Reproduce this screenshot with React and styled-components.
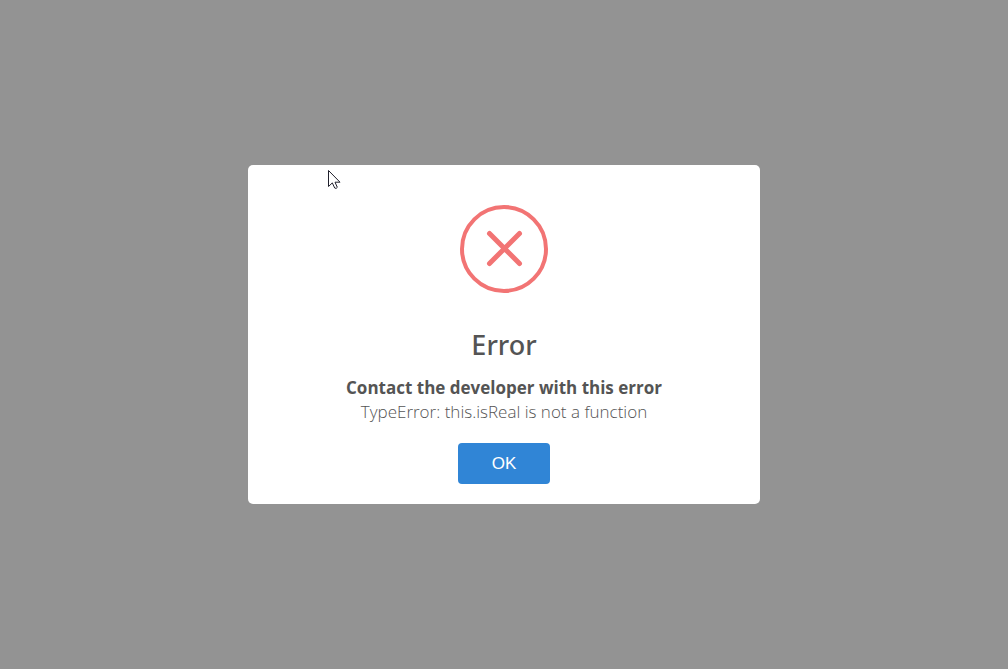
import React from "react";
import styled, { createGlobalStyle } from "styled-components";

const GlobalStyle = createGlobalStyle`
  *, *::before, *::after { box-sizing: border-box; }
  body { margin: 0; background: #939393; }
`;

const Backdrop = styled.main`
  min-height: 100vh;
  padding: 10px;
  display: flex;
  align-items: center;
  justify-content: center;
  background: #939393;
  font-family: "Segoe UI", "Open Sans", "Noto Sans", sans-serif;
`;

const Dialog = styled.section`
  width: 100%;
  max-width: 512px;
  padding: 40px 20px 20px;
  display: flex;
  flex-direction: column;
  align-items: center;
  border-radius: 5px;
  background: #fff;
  color: #545454;
  text-align: center;
`;

const ErrorMark = styled.svg`
  width: 88px;
  height: 88px;
  fill: none;
  stroke: #f27474;
`;

const Title = styled.h2`
  margin: 32px 0 11px;
  font-family: "Segoe UI", "Noto Sans", sans-serif;
  font-size: 27px;
  font-weight: 500;
  line-height: 40px;
`;

const Message = styled.div`
  font-size: 17px;
  font-weight: 300;
  line-height: 24px;
`;

const Lead = styled.strong`
  display: block;
  font-weight: 700;
`;

const Detail = styled.span`
  display: block;
`;

const ConfirmButton = styled.button`
  min-width: 92px;
  height: 41px;
  margin-top: 19px;
  padding: 0 32px;
  border: 0;
  border-radius: 4px;
  background: #3085d6;
  color: #fff;
  font: 400 17px/24px "Liberation Sans", Arial, sans-serif;
  cursor: pointer;
`;

const Pointer = styled.svg`
  position: absolute;
  left: 328px;
  top: 169px;
  width: 13px;
  height: 21px;
  pointer-events: none;
`;

export default function App() {
  return (
    <Backdrop>
      <GlobalStyle />
      <Dialog role="alertdialog" aria-labelledby="title" aria-describedby="message">
        <ErrorMark viewBox="0 0 88 88" aria-hidden="true">
          <circle cx="44" cy="44" r="42" strokeWidth="4" />
          <path d="M29.5 28.5 L59.5 58.5 M59.5 28.5 L29.5 58.5" strokeWidth="5" strokeLinecap="round" />
        </ErrorMark>
        <Title id="title">Error</Title>
        <Message id="message">
          <Lead>Contact the developer with this error</Lead>
          <Detail>TypeError: this.isReal is not a function</Detail>
        </Message>
        <ConfirmButton type="button">OK</ConfirmButton>
      </Dialog>
      <Pointer viewBox="0 0 13 21" aria-hidden="true">
        <path
          d="M.5 1.5 V17.5 L4.3 13.9 L6.7 19 Q8.2 20.2 9.3 18.3 L7 13.2 H12 Z"
          fill="#fff"
          stroke="#20202c"
          strokeLinejoin="round"
        />
      </Pointer>
    </Backdrop>
  );
}
